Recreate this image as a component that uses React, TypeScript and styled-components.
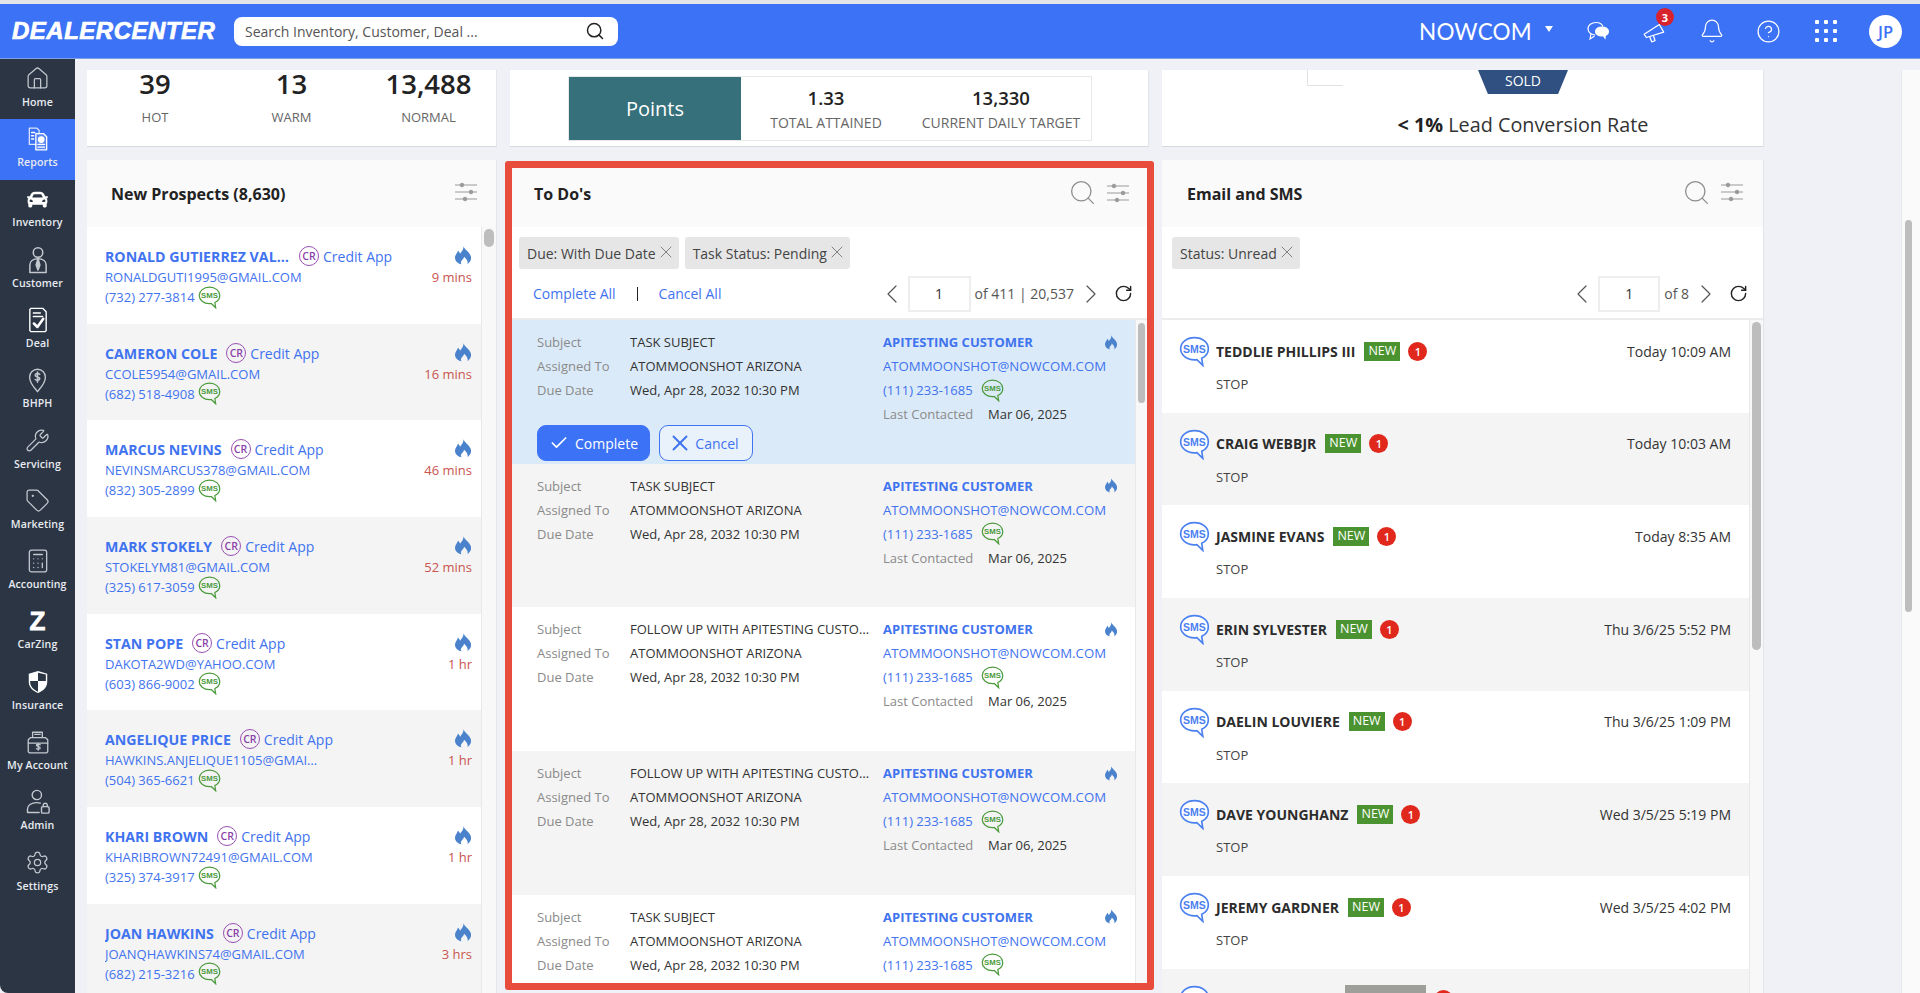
import React from "react";
import styled, { createGlobalStyle } from "styled-components";
import {
  Bell,
  Calculator,
  Check,
  ChevronLeft,
  ChevronRight,
  CircleHelp,
  Home as HomeIcon,
  RotateCw,
  Search,
  Settings,
  Tag,
  Wrench,
  X,
} from "lucide-react";
import { FaCar } from "react-icons/fa";

const BLUE = "#3c72f6";
const LINK = "#3f73ef";

const GlobalStyle = createGlobalStyle`
  html, body { margin: 0; padding: 0; height: 100%; overflow: hidden; }
  body { font-family: "Open Sans", "Noto Sans", sans-serif; color: #333; background: #eff1f6; }
  * { box-sizing: border-box; }
`;

const Page = styled.div`
  width: 1920px;
  height: 993px;
  display: flex;
  flex-direction: column;
  overflow: hidden;
  background: #eff1f6;
`;

const TopLine = styled.div`
  height: 4px;
  flex: none;
  background: #e3e5e8;
`;

const Header = styled.header`
  height: 55px;
  flex: none;
  display: flex;
  align-items: center;
  background: ${BLUE};
  color: #fff;
  padding: 0 18px 0 12px;
  border-bottom: 1px solid #7f9fe6;
`;

const Logo = styled.div`
  width: 222px;
  font-family: "Liberation Sans", sans-serif;
  font-weight: 700;
  font-style: italic;
  font-size: 24px;
  letter-spacing: 0.5px;
  -webkit-text-stroke: 0.7px #fff;
`;

const SearchBox = styled.div`
  width: 384px;
  height: 29px;
  background: #fff;
  border-radius: 8px;
  display: flex;
  align-items: center;
  justify-content: space-between;
  padding: 0 13px 0 11px;
  font-size: 14px;
  color: #555;
`;

const HeaderRight = styled.div`
  margin-left: auto;
  display: flex;
  align-items: center;
`;

const Company = styled.div`
  font-family: "Lato", sans-serif;
  font-size: 22.5px;
  letter-spacing: 0.2px;
  width: 150px;
  display: flex;
  align-items: center;
`;

const Caret = styled.span`
  width: 0;
  height: 0;
  margin: 0 0 4px 13px;
  border-left: 4px solid transparent;
  border-right: 4px solid transparent;
  border-top: 6px solid #fff;
`;

const HeaderIcon = styled.div`
  width: 57px;
  display: flex;
  justify-content: center;
  position: relative;
`;

const CountBadge = styled.span`
  position: absolute;
  top: -10px;
  left: 30px;
  width: 18px;
  height: 18px;
  border-radius: 50%;
  background: #d8232f;
  color: #fff;
  font-size: 11px;
  font-weight: 700;
  display: flex;
  align-items: center;
  justify-content: center;
`;

const Avatar = styled.div`
  width: 33px;
  height: 33px;
  margin-left: 15px;
  border-radius: 50%;
  background: #fff;
  color: ${BLUE};
  font-weight: 600;
  font-size: 16.5px;
  display: flex;
  align-items: center;
  justify-content: center;
`;

const Body = styled.div`
  flex: 1;
  min-height: 0;
  display: flex;
`;

const Sidebar = styled.nav`
  width: 75px;
  flex: none;
  background: #2b3544;
  border-bottom-left-radius: 8px;
`;

const NavItem = styled.div<{ $active?: boolean }>`
  height: 60.3px;
  display: flex;
  flex-direction: column;
  align-items: center;
  justify-content: flex-end;
  gap: 2px;
  padding-bottom: 10.5px;
  color: #e8ebf0;
  background: ${(p) => (p.$active ? BLUE : "transparent")};
  font-size: 10.6px;
  font-weight: 600;
  letter-spacing: 0.1px;
  white-space: nowrap;
`;

const NavGlyph = styled.div<{ $muted?: boolean }>`
  height: 28px;
  display: flex;
  align-items: center;
  justify-content: center;
  color: ${(p) => (p.$muted ? "#c3c8cf" : "#fff")};
`;

const ZMark = styled.span`
  font-family: "Liberation Sans", sans-serif;
  font-weight: 700;
  font-size: 26px;
  line-height: 28px;
  color: #fff;
  -webkit-text-stroke: 0.8px #fff;
`;

const Main = styled.main`
  flex: 1;
  min-width: 0;
  display: flex;
  flex-direction: column;
  padding: 11px 0 0 12px;
  gap: 13px;
`;

const Columns = styled.div<{ $fill?: boolean }>`
  display: grid;
  grid-template-columns: 410px 639px 602px;
  column-gap: 13px;
  height: ${(p) => (p.$fill ? "auto" : "77px")};
  flex: ${(p) => (p.$fill ? "1" : "none")};
  min-height: 0;
`;

const TopCard = styled.section`
  background: #fff;
  border-bottom: 1px solid #d8d9dc;
  border-right: 1px solid #e4e5e8;
  overflow: hidden;
`;

const Counts = styled(TopCard)`
  display: grid;
  grid-template-columns: 136px 137px 137px;
  text-align: center;
`;

const CountValue = styled.div`
  font-size: 27.5px;
  font-weight: 600;
  line-height: 27px;
  color: #222;
`;

const CountLabel = styled.div`
  font-size: 13px;
  line-height: 18px;
  margin-top: 11px;
  color: #666;
`;

const PointsCard = styled(TopCard)`
  padding: 6px 0 0 58px;
`;

const PointsBox = styled.div`
  width: 524px;
  height: 65px;
  border: 1px solid #e8e8e8;
  display: flex;
`;

const PointsTitle = styled.div`
  width: 172px;
  background: #36707b;
  color: #fff;
  font-size: 20px;
  display: flex;
  align-items: center;
  justify-content: center;
`;

const PointsCell = styled.div<{ $w: number }>`
  width: ${(p) => p.$w}px;
  text-align: center;
  color: #666;
  font-size: 14px;
`;

const PointsValue = styled.div`
  font-size: 18.5px;
  font-weight: 600;
  color: #222;
  line-height: 26px;
  margin: 8px 0 2px;
`;

const RateCard = styled(TopCard)`
  display: flex;
  flex-direction: column;
  align-items: center;
  position: relative;
  padding-left: 121px;
`;

const CornerBox = styled.div`
  position: absolute;
  left: 145px;
  top: 0;
  width: 36px;
  height: 16px;
  border-left: 1px solid #e2e2e2;
  border-bottom: 1px solid #e2e2e2;
`;

const SoldTag = styled.div`
  width: 90px;
  height: 24px;
  background: #2f5080;
  color: #fff;
  font-size: 14px;
  line-height: 22px;
  text-align: center;
  clip-path: polygon(0 0, 100% 0, 89% 100%, 11% 100%);
`;

const RateText = styled.div`
  font-size: 19.8px;
  line-height: 26px;
  margin-top: 18px;
  color: #333;
  b {
    font-weight: 700;
    color: #222;
  }
`;

const ListCard = styled.section<{ $flagged?: boolean }>`
  background: #fff;
  display: flex;
  flex-direction: column;
  min-height: 0;
  overflow: hidden;
  ${(p) =>
    p.$flagged
      ? `margin: 1px -5px 3px; border: 7px solid #e84c3d; border-radius: 3px;`
      : `border-right: 1px solid #e4e5e8;`}
`;

const CardHead = styled.div<{ $pad: number; $h: number; $right: number; $lift?: number }>`
  height: ${(p) => p.$h}px;
  flex: none;
  background: #fafafa;
  display: flex;
  align-items: center;
  padding: 0 ${(p) => p.$right}px ${(p) => p.$lift ?? 0}px ${(p) => p.$pad}px;
`;

const CardTitle = styled.h2`
  margin: 0;
  font-size: 16px;
  font-weight: 700;
  color: #222;
`;

const HeadTools = styled.div`
  margin-left: auto;
  display: flex;
  align-items: center;
  gap: 10px;
  color: #8e8e8e;
  margin-top: -3px;
`;

const ChipRow = styled.div<{ $left: number }>`
  display: flex;
  gap: 6px;
  padding: 10px 0 0 ${(p) => p.$left}px;
  flex: none;
`;

const Chip = styled.div`
  height: 32px;
  padding: 0 3px 0 8px;
  background: #e6e6e6;
  border-radius: 3px;
  font-size: 14px;
  color: #444;
  display: flex;
  align-items: center;
  white-space: nowrap;
  svg {
    color: #777;
    margin-top: -2px;
  }
`;

const ActionRow = styled.div`
  height: 51px;
  flex: none;
  display: flex;
  align-items: center;
  border-bottom: 2px solid #ececec;
  padding: 0 14px 0 21px;
  font-size: 14px;
  color: ${LINK};
`;

const Divider = styled.span`
  width: 1px;
  height: 14px;
  background: #222;
  margin: 0 21px;
`;

const Pager = styled.div<{ $nudge?: number }>`
  margin-left: auto;
  margin-right: ${(p) => p.$nudge ?? 0}px;
  display: flex;
  align-items: center;
  color: #555;
  font-size: 14px;
`;

const PageInput = styled.div<{ $w: number }>`
  width: ${(p) => p.$w}px;
  height: 36px;
  margin-right: 4px;
  border: 2px solid #eee;
  display: flex;
  align-items: center;
  justify-content: center;
  font-size: 14px;
  color: #333;
`;

const RefreshWrap = styled.span`
  margin-left: 7px;
  display: flex;
  color: #222;
`;

const NextWrap = styled.span`
  margin-left: 1px;
  display: flex;
`;

const ListArea = styled.div`
  flex: 1;
  min-height: 0;
  display: flex;
  overflow: hidden;
`;

const ListRows = styled.div`
  flex: 1;
  min-width: 0;
`;

const Track = styled.div<{ $w: number; $pt: number }>`
  width: ${(p) => p.$w}px;
  flex: none;
  background: #f8f8f8;
  border-left: 1px solid #e8e8e8;
  padding: ${(p) => p.$pt}px 2px 0 2px;
`;

const Thumb = styled.div<{ $h: number }>`
  height: ${(p) => p.$h}px;
  border-radius: 5px;
  background: #bdbdbd;
`;

const Striped = styled.div<{ $index: number }>`
  background: ${(p) => (p.$index % 2 === 1 ? "#f4f4f4" : "#fff")};
`;

const ProspectRow = styled(Striped)`
  height: 96.7px;
  padding: 20px 9px 0 18px;
  display: flex;
  font-size: 13px;
  line-height: 20px;
  color: ${LINK};
`;

const ProspectInfo = styled.div`
  flex: 1;
  min-width: 0;
`;

const NameLine = styled.div`
  display: flex;
  align-items: center;
`;

const ProspectName = styled.span`
  font-weight: 700;
  font-size: 14.2px;
  max-width: 185px;
  overflow: hidden;
  text-overflow: ellipsis;
  white-space: nowrap;
`;

const CrMark = styled.span`
  width: 20px;
  height: 20px;
  margin: -2px 4px 0 9px;
  border: 1px solid #9a4fb5;
  border-radius: 50%;
  color: #8a3fa8;
  font-size: 10.5px;
  font-weight: 600;
  display: flex;
  align-items: center;
  justify-content: center;
`;

const CreditText = styled.span`
  font-size: 14px;
`;

const Truncate = styled.div`
  max-width: 215px;
  overflow: hidden;
  text-overflow: ellipsis;
  white-space: nowrap;
`;

const PhoneLine = styled.div`
  height: 20px;
  display: flex;
  align-items: center;
  gap: 3px;
`;

const ProspectTime = styled.div`
  display: flex;
  flex-direction: column;
  align-items: flex-end;
  color: #c9544f;
  svg {
    margin: -1px 1px 2px 0;
  }
`;

const TodoRow = styled.div<{ $bg: string }>`
  height: 143.7px;
  padding: 10px 0 0 25px;
  background: ${(p) => p.$bg};
`;

const TodoColumns = styled.div`
  display: grid;
  grid-template-columns: 346px 1fr;
`;

const Field = styled.div`
  display: grid;
  grid-template-columns: 93px 1fr;
  height: 24px;
  line-height: 24px;
  font-size: 13px;
  white-space: nowrap;
  color: #333;
`;

const FieldLabel = styled.span`
  color: #8a8a8a;
`;

const FieldClip = styled.span`
  max-width: 245px;
  overflow: hidden;
  text-overflow: ellipsis;
`;

const ContactLine = styled.div`
  height: 24px;
  line-height: 24px;
  font-size: 13.2px;
  color: ${LINK};
  display: flex;
  align-items: center;
  white-space: nowrap;
`;

const ContactName = styled.span`
  font-weight: 700;
  font-size: 13px;
  width: 222px;
`;

const LastContacted = styled.span`
  color: #8a8a8a;
  font-size: 13px;
  width: 105px;
`;

const DateText = styled.span`
  color: #333;
  font-size: 13px;
`;

const PhoneGap = styled.span`
  margin-right: 8px;
  font-size: 13px;
`;

const ButtonRow = styled.div`
  display: flex;
  gap: 9px;
  margin-top: -1px;
`;

const BaseButton = styled.button`
  height: 36px;
  border-radius: 9px;
  font-family: inherit;
  font-size: 14px;
  display: flex;
  align-items: center;
  justify-content: center;
  padding: 0;
`;

const CompleteButton = styled(BaseButton)`
  width: 113px;
  gap: 6px;
  background: ${BLUE};
  border: 1px solid ${BLUE};
  color: #fff;
`;

const CancelButton = styled(BaseButton)`
  width: 94px;
  gap: 2px;
  background: #e9f2fb;
  border: 1px solid ${LINK};
  color: ${LINK};
  svg {
    margin-left: -6px;
  }
`;

const MessageRow = styled(Striped)`
  height: 92.7px;
  padding: 16px 18px 0 17px;
  display: grid;
  grid-template-columns: 37px 1fr;
  grid-template-rows: 30px 1fr;
`;

const MessageHead = styled.div`
  display: flex;
  align-items: center;
  font-size: 14px;
  color: #333;
`;

const MessageName = styled.span`
  font-weight: 700;
  color: #2c2c2c;
`;

const NewBadge = styled.span`
  height: 19px;
  width: 36px;
  margin-left: 9px;
  background: #4b9330;
  color: #fff;
  font-size: 12.5px;
  line-height: 18px;
  text-align: center;
`;

const RedDot = styled.span`
  width: 19px;
  height: 19px;
  margin-left: 8px;
  background: #e0281c;
  color: #fff;
  border-radius: 50%;
  font-size: 11px;
  font-weight: 600;
  display: flex;
  align-items: center;
  justify-content: center;
`;

const MessageTime = styled.span`
  margin-left: auto;
`;

const MessageBody = styled.div`
  grid-column: 2;
  font-size: 13px;
  line-height: 18px;
  padding-top: 9px;
  color: #444;
`;

const Redaction = styled.span`
  width: 81px;
  height: 30px;
  margin-left: 129px;
  background: #9e9e9a;
`;

const PageBar = styled.div`
  width: 19px;
  flex: none;
  margin-left: auto;
  margin-top: 11px;
  background: #fafafa;
  border-left: 1px solid #e8e9ec;
  padding: 150px 8px 0 3px;
`;

const PageThumb = styled.div`
  height: 392px;
  border-radius: 4px;
  background: #bdbdbd;
`;

const Icon = ({ size = 26, children }: { size?: number; children: React.ReactNode }) => (
  <svg width={size} height={size} viewBox="0 0 24 24" fill="none" stroke="currentColor" strokeWidth="1.2" strokeLinecap="round" strokeLinejoin="round">
    {children}
  </svg>
);

const Sliders = () => (
  <svg width="22" height="20" viewBox="0 0 22 20" fill="#9a9a9a" stroke="#9a9a9a" strokeWidth="1">
    <path d="M0 3h22M0 10h22M0 17h22" />
    <circle cx="7" cy="3" r="1.8" />
    <circle cx="16" cy="10" r="1.8" />
    <circle cx="10" cy="17" r="1.8" />
  </svg>
);

const Flame = ({ w = 16, h = 19 }: { w?: number; h?: number }) => (
  <svg width={w} height={h} viewBox="3 0 18 24" fill="#4b82cc" preserveAspectRatio="none">
    <path d="M12.5 0c.6 4.600 7.500 7.400 8.500 14 .5 3.500-1.200 6.800-4 9 1-3.400-.6-6.200-3.800-9.400-.4 3-2.300 3.900-3.200 5.600-.8 1.500-.4 2.900.5 3.800C6 22.300 3 19 3 14.800 3 11 5.500 9.500 6.300 6c1 1 2 2.200 2.400 3.700C10.700 7 13 4 12.500 0z" />
  </svg>
);

const SmsBubble = ({ color, size, fill }: { color: string; size: number; fill?: boolean }) => (
  <svg width={size} height={size} viewBox="0 0 28 28" fill="none">
    <path d="M14 1.500C6.800 1.500 1.500 6 1.500 11.500S6.800 21.500 14 21.500c.8 0 1.500 0 2.200-.2l5.300 5.200-1-6.400c3.700-1.700 6-5 6-8.600C26.500 6 21.200 1.500 14 1.500z" stroke={color} strokeWidth="1.500" fill={fill ? "#fff" : "none"} />
    <text x="14" y="15" textAnchor="middle" fontSize="9.500" fontWeight="700" fontFamily="Liberation Sans, sans-serif" fill={color}>SMS</text>
  </svg>
);

const navItems: { label: string; glyph: React.ReactNode; active?: boolean; muted?: boolean }[] = [
  { label: "Home", muted: true, glyph: <HomeIcon size={25} strokeWidth={1.2} /> },
  {
    label: "Reports",
    active: true,
    glyph: (
      <Icon>
        <path d="M4 2h7l2 2v3M4 2v15h6" opacity=".8" />
        <path d="M10 7h7l3 3v12H10z" fill="#fff" fillOpacity=".15" />
        <circle cx="15" cy="12.500" r="2.500" fill="#fff" />
        <path d="M12 17h6M12 19.500h6M6 6h3M6 9h2M6 12h2" />
      </Icon>
    ),
  },
  { label: "Inventory", glyph: <FaCar size={21} /> },
  {
    label: "Customer",
    muted: true,
    glyph: (
      <Icon size={30}>
        <circle cx="12" cy="6" r="3.800" />
        <path d="M5.500 22v-6c0-3 2.500-5 6.500-5s6.500 2 6.500 5v6z" />
        <path d="M12 11l-1.500 5 1.500 4 1.500-4z" fill="currentColor" />
      </Icon>
    ),
  },
  {
    label: "Deal",
    glyph: (
      <Icon size={28}>
        <path d="M6 2h10l3 3v16l-1 1H6l-1-1V3z" />
        <path d="M8 6h6M8 9h8" />
        <path d="M8.500 15l3 3 5-7" strokeWidth="2.200" />
      </Icon>
    ),
  },
  {
    label: "BHPH",
    muted: true,
    glyph: (
      <Icon size={27}>
        <path d="M12 22c-1-2-7-7-7-13a7 7 0 0 1 14 0c0 6-6 11-7 13z" />
        <path d="M14 6.500c-1-1-4-1-4 .8s4 1.200 4 3-3 1.800-4 .8M12 4.500v9" strokeWidth="1.400" />
      </Icon>
    ),
  },
  { label: "Servicing", muted: true, glyph: <Wrench size={25} strokeWidth={1.2} /> },
  { label: "Marketing", muted: true, glyph: <Tag size={25} strokeWidth={1.2} /> },
  { label: "Accounting", muted: true, glyph: <Calculator size={26} strokeWidth={1.2} /> },
  { label: "CarZing", glyph: <ZMark>Z</ZMark> },
  {
    label: "Insurance",
    glyph: (
      <svg width="24" height="24" viewBox="0 0 24 26">
        <path d="M12 1l10 3v9c0 6-5 10-10 12C7 23 2 19 2 13V4z" fill="#fff" />
        <path d="M12 3v9H3.500V13c0 5 4 8.500 8.500 10.500V12h8.500V5z" fill="#2b3544" />
      </svg>
    ),
  },
  {
    label: "My Account",
    muted: true,
    glyph: (
      <Icon>
        <path d="M7 8V3h9v5M3 10l2-2h14l2 2v11l-1 1H4l-1-1z" />
        <path d="M9 5h5M3 13h18" />
        <path d="M14 14.500c-.8-.8-3.500-.8-3.500.6s3.500 1 3.500 2.400-2.700 1.400-3.500.6M12.200 13.500v6" />
      </Icon>
    ),
  },
  {
    label: "Admin",
    muted: true,
    glyph: (
      <Icon size={28}>
        <circle cx="11" cy="6" r="4" />
        <path d="M3 21v-3c0-3 3-5.500 8-5.500 1 0 2 .1 3 .4M3 21h10" />
        <rect x="15" y="16" width="6.500" height="5.500" rx="1" />
        <path d="M16.500 16v-1.500a1.800 1.800 0 0 1 3.500 0V16" />
      </Icon>
    ),
  },
  { label: "Settings", muted: true, glyph: <Settings size={25} strokeWidth={1.2} /> },
];

const prospects = [
  ["RONALD GUTIERREZ VALENCIA", "RONALDGUTI1995@GMAIL.COM", "(732) 277-3814", "9 mins"],
  ["CAMERON COLE", "CCOLE5954@GMAIL.COM", "(682) 518-4908", "16 mins"],
  ["MARCUS NEVINS", "NEVINSMARCUS378@GMAIL.COM", "(832) 305-2899", "46 mins"],
  ["MARK STOKELY", "STOKELYM81@GMAIL.COM", "(325) 617-3059", "52 mins"],
  ["STAN POPE", "DAKOTA2WD@YAHOO.COM", "(603) 866-9002", "1 hr"],
  ["ANGELIQUE PRICE", "HAWKINS.ANJELIQUE1105@GMAIL.COM", "(504) 365-6621", "1 hr"],
  ["KHARI BROWN", "KHARIBROWN72491@GMAIL.COM", "(325) 374-3917", "1 hr"],
  ["JOAN HAWKINS", "JOANQHAWKINS74@GMAIL.COM", "(682) 215-3216", "3 hrs"],
];

const todos = [
  { subject: "TASK SUBJECT", bg: "#dbeaf8", active: true },
  { subject: "TASK SUBJECT", bg: "#f4f4f4" },
  { subject: "FOLLOW UP WITH APITESTING CUSTOMER", bg: "#fff" },
  { subject: "FOLLOW UP WITH APITESTING CUSTOMER", bg: "#f4f4f4" },
  { subject: "TASK SUBJECT", bg: "#fff" },
];

const messages = [
  ["TEDDLIE PHILLIPS III", "Today 10:09 AM"],
  ["CRAIG WEBBJR", "Today 10:03 AM"],
  ["JASMINE EVANS", "Today 8:35 AM"],
  ["ERIN SYLVESTER", "Thu 3/6/25 5:52 PM"],
  ["DAELIN LOUVIERE", "Thu 3/6/25 1:09 PM"],
  ["DAVE YOUNGHANZ", "Wed 3/5/25 5:19 PM"],
  ["JEREMY GARDNER", "Wed 3/5/25 4:02 PM"],
];

const ChipItem = ({ text }: { text: string }) => (
  <Chip>
    {text}
    <X size={20} strokeWidth={1.1} />
  </Chip>
);

const PagerBlock = ({ w, text, nudge }: { w: number; text: string; nudge?: number }) => (
  <Pager $nudge={nudge}>
    <ChevronLeft size={32} strokeWidth={0.9} />
    <PageInput $w={w}>1</PageInput>
    {text}
    <NextWrap>
      <ChevronRight size={32} strokeWidth={0.9} />
    </NextWrap>
    <RefreshWrap>
      <RotateCw size={19} strokeWidth={1.8} />
    </RefreshWrap>
  </Pager>
);

const App: React.FC = () => {
  return (
    <Page>
      <GlobalStyle />
      <TopLine />
      <Header>
        <Logo>DEALERCENTER</Logo>
        <SearchBox>
          Search Inventory, Customer, Deal ...
          <Search size={20} strokeWidth={1.8} color="#222" />
        </SearchBox>
        <HeaderRight>
          <Company>
            NOWCOM
            <Caret />
          </Company>
          <HeaderIcon>
            <svg width="24" height="24" viewBox="0 0 24 24" fill="none" stroke="#fff" strokeWidth="1.2">
              <path d="M9 16c-4-.5-7-3-7-6.500C2 6 5.500 3.500 10 3.500c3.500 0 6 1.500 7 4" />
              <path d="M5 14.500L4 20l4.500-3" />
              <ellipse cx="16" cy="12.500" rx="6.500" ry="4.500" fill="#fff" />
              <path d="M17 16l2 3 .5-4" fill="#fff" />
            </svg>
          </HeaderIcon>
          <HeaderIcon>
            <svg width="26" height="26" viewBox="0 0 24 24" fill="none" stroke="#fff" strokeWidth="1.2" strokeLinejoin="round">
              <path d="M2 15l14-9 4 7-16 5z" />
              <path d="M7 17l2 5 3-1-1.500-5" />
            </svg>
            <CountBadge>3</CountBadge>
          </HeaderIcon>
          <HeaderIcon>
            <Bell size={26} strokeWidth={1.1} />
          </HeaderIcon>
          <HeaderIcon>
            <CircleHelp size={25} strokeWidth={1.2} />
          </HeaderIcon>
          <HeaderIcon>
            <svg width="22" height="22" viewBox="0 0 22 22" fill="#fff">
              {[2, 11, 20].flatMap((y) =>
                [2, 11, 20].map((x) => <rect key={`${x}-${y}`} x={x - 2} y={y - 2} width="4" height="4" rx="1" />)
              )}
            </svg>
          </HeaderIcon>
          <Avatar>JP</Avatar>
        </HeaderRight>
      </Header>
      <Body>
        <Sidebar>
          {navItems.map((item) => (
            <NavItem key={item.label} $active={item.active}>
              <NavGlyph $muted={item.muted}>{item.glyph}</NavGlyph>
              {item.label}
            </NavItem>
          ))}
        </Sidebar>
        <Main>
          <Columns>
            <Counts>
              {[
                ["39", "HOT"],
                ["13", "WARM"],
                ["13,488", "NORMAL"],
              ].map(([value, label]) => (
                <div key={label}>
                  <CountValue>{value}</CountValue>
                  <CountLabel>{label}</CountLabel>
                </div>
              ))}
            </Counts>
            <PointsCard>
              <PointsBox>
                <PointsTitle>Points</PointsTitle>
                <PointsCell $w={170}>
                  <PointsValue>1.33</PointsValue>
                  TOTAL ATTAINED
                </PointsCell>
                <PointsCell $w={180}>
                  <PointsValue>13,330</PointsValue>
                  CURRENT DAILY TARGET
                </PointsCell>
              </PointsBox>
            </PointsCard>
            <RateCard>
              <CornerBox />
              <SoldTag>SOLD</SoldTag>
              <RateText>
                <b>&lt; 1%</b> Lead Conversion Rate
              </RateText>
            </RateCard>
          </Columns>
          <Columns $fill>
            <ListCard>
              <CardHead $pad={24} $h={67} $right={19}>
                <CardTitle>New Prospects (8,630)</CardTitle>
                <HeadTools>
                  <Sliders />
                </HeadTools>
              </CardHead>
              <ListArea>
                <ListRows>
                  {prospects.map(([name, email, phone, time], i) => (
                    <ProspectRow key={name} $index={i}>
                      <ProspectInfo>
                        <NameLine>
                          <ProspectName>{name}</ProspectName>
                          <CrMark>CR</CrMark>
                          <CreditText>Credit App</CreditText>
                        </NameLine>
                        <Truncate>{email}</Truncate>
                        <PhoneLine>
                          {phone}
                          <SmsBubble color="#4b9a3c" size={23} />
                        </PhoneLine>
                      </ProspectInfo>
                      <ProspectTime>
                        <Flame />
                        {time}
                      </ProspectTime>
                    </ProspectRow>
                  ))}
                </ListRows>
                <Track $w={15} $pt={2}>
                  <Thumb $h={18} />
                </Track>
              </ListArea>
            </ListCard>
            <ListCard $flagged>
              <CardHead $pad={22} $h={59} $right={18} $lift={7}>
                <CardTitle>To Do's</CardTitle>
                <HeadTools>
                  <Search size={29} strokeWidth={1.1} />
                  <Sliders />
                </HeadTools>
              </CardHead>
              <ChipRow $left={7}>
                <ChipItem text="Due: With Due Date" />
                <ChipItem text="Task Status: Pending" />
              </ChipRow>
              <ActionRow>
                Complete All
                <Divider />
                Cancel All
                <PagerBlock w={63} text="of 411 | 20,537" />
              </ActionRow>
              <ListArea>
                <ListRows>
                  {todos.map((todo, i) => (
                    <TodoRow key={i} $bg={todo.bg}>
                      <TodoColumns>
                        <div>
                          <Field>
                            <FieldLabel>Subject</FieldLabel>
                            <FieldClip>{todo.subject}</FieldClip>
                          </Field>
                          <Field>
                            <FieldLabel>Assigned To</FieldLabel>
                            <span>ATOMMOONSHOT ARIZONA</span>
                          </Field>
                          <Field>
                            <FieldLabel>Due Date</FieldLabel>
                            <span>Wed, Apr 28, 2032 10:30 PM</span>
                          </Field>
                        </div>
                        <div>
                          <ContactLine>
                            <ContactName>APITESTING CUSTOMER</ContactName>
                            <Flame w={12} h={15} />
                          </ContactLine>
                          <ContactLine>ATOMMOONSHOT@NOWCOM.COM</ContactLine>
                          <ContactLine>
                            <PhoneGap>(111) 233-1685</PhoneGap>
                            <SmsBubble color="#4b9a3c" size={23} />
                          </ContactLine>
                          <ContactLine>
                            <LastContacted>Last Contacted</LastContacted>
                            <DateText>Mar 06, 2025</DateText>
                          </ContactLine>
                        </div>
                      </TodoColumns>
                      {todo.active && (
                        <ButtonRow>
                          <CompleteButton>
                            <Check size={20} strokeWidth={2} />
                            Complete
                          </CompleteButton>
                          <CancelButton>
                            <X size={26} strokeWidth={1.8} />
                            Cancel
                          </CancelButton>
                        </ButtonRow>
                      )}
                    </TodoRow>
                  ))}
                </ListRows>
                <Track $w={12} $pt={3}>
                  <Thumb $h={80} />
                </Track>
              </ListArea>
            </ListCard>
            <ListCard>
              <CardHead $pad={25} $h={67} $right={20}>
                <CardTitle>Email and SMS</CardTitle>
                <HeadTools>
                  <Search size={29} strokeWidth={1.1} />
                  <Sliders />
                </HeadTools>
              </CardHead>
              <ChipRow $left={10}>
                <ChipItem text="Status: Unread" />
              </ChipRow>
              <ActionRow>
                <PagerBlock w={62} text="of 8" nudge={1} />
              </ActionRow>
              <ListArea>
                <ListRows>
                  {messages.map(([name, time], i) => (
                    <MessageRow key={name} $index={i}>
                      <SmsBubble color="#4a80f0" size={31} fill />
                      <MessageHead>
                        <MessageName>{name}</MessageName>
                        <NewBadge>NEW</NewBadge>
                        <RedDot>1</RedDot>
                        <MessageTime>{time}</MessageTime>
                      </MessageHead>
                      <MessageBody>STOP</MessageBody>
                    </MessageRow>
                  ))}
                  <MessageRow $index={7}>
                    <SmsBubble color="#4a80f0" size={31} fill />
                    <MessageHead>
                      <Redaction />
                      <RedDot>1</RedDot>
                    </MessageHead>
                  </MessageRow>
                </ListRows>
                <Track $w={14} $pt={2}>
                  <Thumb $h={328} />
                </Track>
              </ListArea>
            </ListCard>
          </Columns>
        </Main>
        <PageBar>
          <PageThumb />
        </PageBar>
      </Body>
    </Page>
  );
};

export default App;
